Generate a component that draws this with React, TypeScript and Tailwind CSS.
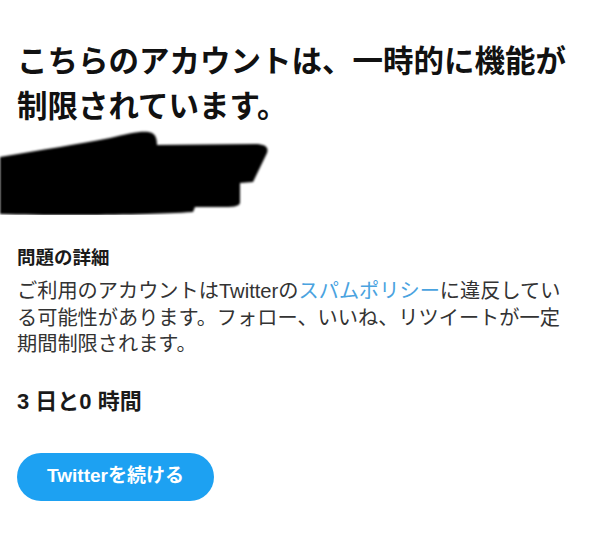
import React from 'react';

const jp = '"Liberation Sans", "Noto Sans CJK JP", sans-serif';

function Scribble() {
  return (
    <svg width="280" height="90" viewBox="0 125 280 90" className="block">
      <defs>
        <filter id="soft" x="-5%" y="-5%" width="110%" height="110%">
          <feGaussianBlur stdDeviation="0.8" />
        </filter>
      </defs>
      <path
        filter="url(#soft)"
        fill="#000"
        d="M0,157 C40,150 80,144 110,138 C130,133 145,130 152,133 C156,135 157,140 157,145 L255,144 C266,144 270,148 266,155 L253,182 L240,183 L240,203 C238,208 230,207 195,207 L193,212 C150,215 60,216 0,214 Z"
      />
    </svg>
  );
}

export default function App() {
  return (
    <div className="w-[600px] h-[549px] bg-white overflow-hidden" style={{ fontFamily: jp }}>
      <div className="px-[17px] pt-[39px]">
        <h1 className="text-[30.5px] leading-[45px] font-bold text-[#111]">
          こちらのアカウントは、一時的に機能が制限されています。
        </h1>
      </div>
      <div className="-mt-[4px]">
        <Scribble />
      </div>
      <div className="px-[17px] mt-[30px]">
        <h2 className="text-[18.5px] leading-[26px] font-bold text-[#1a1a1a]">問題の詳細</h2>
        <p className="mt-[7px] w-[553px] text-[20.2px] leading-[26.5px] text-[#333]">
          ご利用のアカウントはTwitterの<span className="text-[#4aa3df]">スパムポリシー</span>
          に違反している可能性があります。フォロー、いいね、リツイートが一定期間制限されます。
        </p>
        <div className="mt-[29px] text-[22px] leading-[30px] font-bold text-[#1a1a1a]">3 日と0 時間</div>
        <button className="mt-[36px] h-[48px] w-[197px] rounded-full bg-[#1da1f2] text-white text-[19px] font-bold">
          Twitterを続ける
        </button>
      </div>
    </div>
  );
}
